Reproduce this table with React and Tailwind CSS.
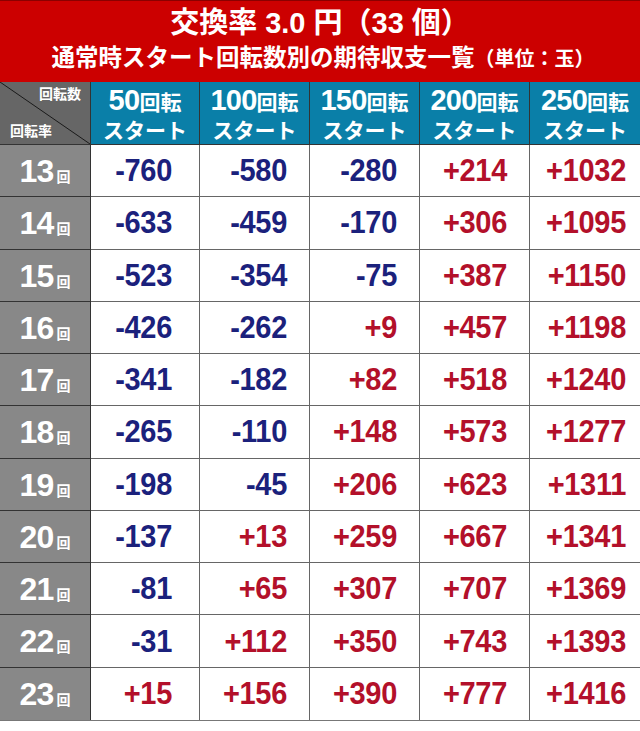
import React from 'react';

const cols = ['50', '100', '150', '200', '250'];

// 回転率ごとの期待収支（単位：玉）
const rows = [
  [13, -760, -580, -280, 214, 1032],
  [14, -633, -459, -170, 306, 1095],
  [15, -523, -354, -75, 387, 1150],
  [16, -426, -262, 9, 457, 1198],
  [17, -341, -182, 82, 518, 1240],
  [18, -265, -110, 148, 573, 1277],
  [19, -198, -45, 206, 623, 1311],
  [20, -137, 13, 259, 667, 1341],
  [21, -81, 65, 307, 707, 1369],
  [22, -31, 112, 350, 743, 1393],
  [23, 15, 156, 390, 777, 1416],
];

const pad = ['pr-[27px]', 'pr-[22px]', 'pr-[22px]', 'pr-[22px]', 'pr-[14px]'];

const fmt = (v) => (v > 0 ? `+${v}` : `${v}`);

export default function App() {
  return (
    <div
      className="w-[640px] h-[731px] bg-white overflow-hidden"
      style={{ fontFamily: '"Liberation Sans", "Noto Sans CJK JP", sans-serif' }}
    >
      {/* タイトル */}
      <div className="h-[82px] bg-[#cc0000] border-t border-[#8a0000] flex flex-col items-center text-white font-bold">
        <div className="text-[29px] leading-none mt-[8px]">
          交換率 3.0 円（33 個）
        </div>
        <div className="text-[23.5px] leading-none mt-[9px] ml-[6px]">
          通常時スタート回転数別の期待収支一覧
          <span className="text-[20px]">（単位：玉）</span>
        </div>
      </div>

      {/* テーブル */}
      <div className="grid grid-cols-[91px_109px_110px_110px_110px_110px] grid-rows-[63px_repeat(11,52.27px)] border-b border-[#777]">
        <div className="relative bg-[#666666] border-r border-b border-[#333] text-white font-bold text-[14px] leading-none">
          <svg className="absolute inset-0" width="90" height="62" viewBox="0 0 90 62">
            <line x1="0" y1="0" x2="90" y2="62" stroke="#1a1a1a" strokeWidth="1" />
          </svg>
          <span className="absolute right-[9px] top-[5px]">回転数</span>
          <span className="absolute left-[10px] bottom-[6px]">回転率</span>
        </div>
        {cols.map((c, i) => (
          <div
            key={c}
            className={`bg-[#0a7fa8] border-b border-[#333] text-white font-bold flex flex-col items-center justify-center ${i < 4 ? 'border-r' : ''}`}
          >
            <div className="leading-none flex items-baseline">
              <span className="text-[29px] tracking-tight">{c}</span>
              <span className="text-[21px]">回転</span>
            </div>
            <div className="text-[21px] leading-none mt-[5px]">スタート</div>
          </div>
        ))}

        {rows.map(([label, ...vals], r) => (
          <React.Fragment key={label}>
            <div
              className={`bg-[#888888] border-r border-[#333] text-white font-bold flex items-baseline justify-center pt-[10px] ${r < 10 ? 'border-b' : ''}`}
            >
              <span className="text-[32px] leading-none tracking-tight">{label}</span>
              <span className="text-[14px] leading-none ml-[3px]">回</span>
            </div>
            {vals.map((v, i) => (
              <div
                key={i}
                className={`flex items-center justify-end font-bold text-[29px] leading-none tracking-[-0.3px] border-[#666] ${pad[i]} ${i < 4 ? 'border-r' : ''} ${r < 10 ? 'border-b' : ''} ${v > 0 ? 'text-[#b3102a]' : 'text-[#1b217c]'}`}
              >
                <span className="inline-block scale-y-[1.08]">{fmt(v)}</span>
              </div>
            ))}
          </React.Fragment>
        ))}
      </div>
    </div>
  );
}
